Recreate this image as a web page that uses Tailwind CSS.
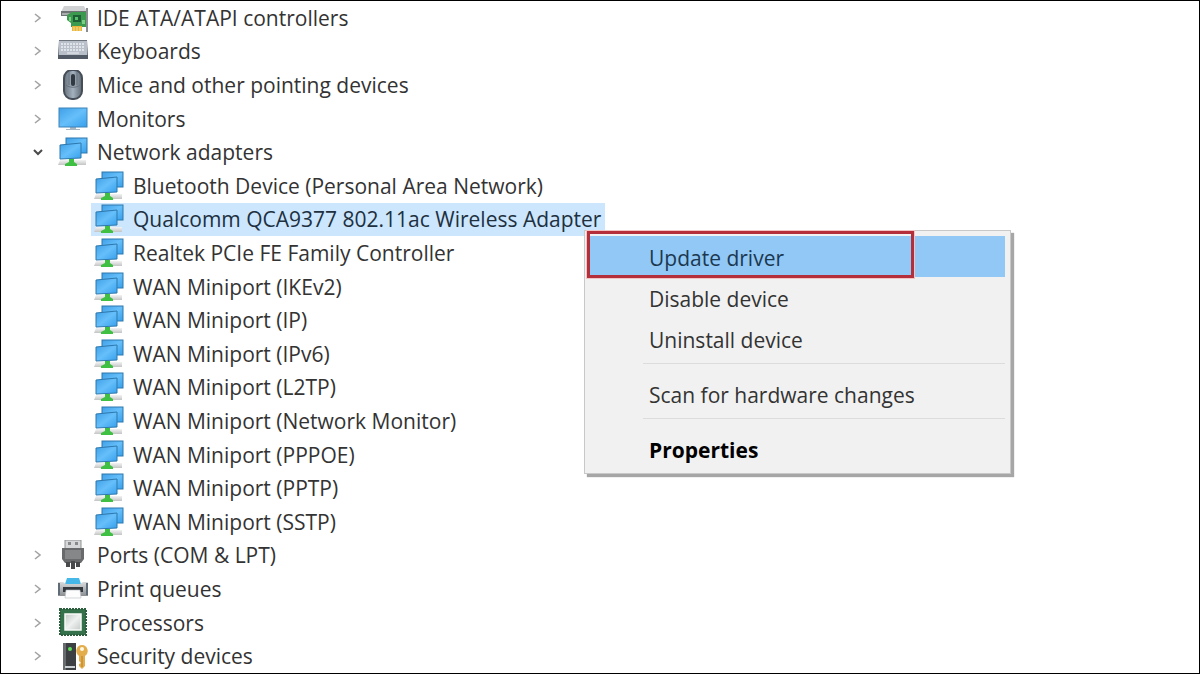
<!DOCTYPE html>
<html lang="en">
<head>
    <meta charset="UTF-8">
    <meta name="viewport" content="width=device-width, initial-scale=1.0">
    <title>Device Manager</title>
    <script src="https://cdn.jsdelivr.net/npm/@tailwindcss/browser@4"></script>
</head>
<body class="bg-white">
    <!-- Icon sprites (zero size, not hidden, so the gradients still resolve) -->
    <svg class="absolute size-0" aria-hidden="true">
        <defs>
            <linearGradient id="screen" x1="0" y1="0" x2="1" y2="1">
                <stop offset="0" stop-color="#3f9fe6"/><stop offset=".5" stop-color="#66bffa"/><stop offset="1" stop-color="#369fec"/>
            </linearGradient>
            <linearGradient id="metal" x1="0" y1="0" x2="0" y2="1">
                <stop offset="0" stop-color="#d9dbdd"/><stop offset="1" stop-color="#8b8f92"/>
            </linearGradient>
            <linearGradient id="mouseBody" x1="0" y1="0" x2="1" y2="0">
                <stop offset="0" stop-color="#66717d"/><stop offset=".5" stop-color="#a3b0bd"/><stop offset="1" stop-color="#5e6974"/>
            </linearGradient>
            <linearGradient id="chip" x1="0" y1="0" x2="1" y2="1">
                <stop offset="0" stop-color="#c2c8c6"/><stop offset=".5" stop-color="#eef1f0"/><stop offset="1" stop-color="#c5cac8"/>
            </linearGradient>
            <linearGradient id="base" x1="0" y1="0" x2="0" y2="1">
                <stop offset="0" stop-color="#f3f3f3"/><stop offset="1" stop-color="#c3c5c4"/>
            </linearGradient>
        </defs>
        <symbol id="right" viewBox="0 0 10 12"><path d="M2 2l5 4-5 4" fill="none" stroke="#a3a3a3" stroke-width="1.6"/></symbol>
        <symbol id="down" viewBox="0 0 12 10"><path d="M1 3l4 4 4-4" fill="none" stroke="#4a4a4a" stroke-width="2"/></symbol>
        <symbol id="ide" viewBox="0 0 30 30">
            <path d="M6 3h20l3 6H3z" fill="#cfd1d2"/>
            <path d="M3 8h26v5H3z" fill="#6f7374"/>
            <path d="M4 10h9v2H4z" fill="#a9adae"/>
            <path d="M9 12l5-3h14v15H13v-4l-4-3z" fill="#3c9a4f"/>
            <path d="M15 12h8v7h-8z" fill="#1f5f35"/>
            <path d="M17 14h3v3h-3z" fill="#58c06c"/>
            <path d="M11 14h2v4h-2zM24 17h3v4h-3z" fill="#7ccf86"/>
            <path d="M14 23h10v5H14z" fill="#e8b53c"/>
            <path d="M16 24v4M19 24v4M22 24v4" stroke="#f8df93"/>
            <path d="M28 5h2v24h-2z" fill="#8a8e90"/>
        </symbol>
        <symbol id="keyboard" viewBox="0 0 30 30">
            <path d="M1 4h28l1 15v4H0v-4z" fill="#6d747c"/>
            <path d="M1 5h28v14H1z" fill="#b9c0c9"/>
            <path d="M3 8h24M3 11h24M3 14h24" stroke="#dfe4ea" stroke-width="2" stroke-dasharray="2 1"/>
            <path d="M9 17h12" stroke="#edf0f4"/>
            <path d="M0 19h30v4H0z" fill="#515a65"/>
        </symbol>
        <symbol id="mouse" viewBox="0 0 30 30">
            <rect x="6" y="0" width="18" height="29" rx="8" fill="url(#mouseBody)" stroke="#454e58" stroke-width="2"/>
            <path d="M8 15c3 3 11 3 14 0M11 2v13M19 2v13" fill="none" stroke="#67727e"/>
            <rect x="13" y="4" width="4" height="12" rx="2" fill="#303842"/>
        </symbol>
        <symbol id="monitor" viewBox="0 0 30 30">
            <path d="M12 23h6v2h4v1H8v-1h4z" fill="#a9b7c2"/>
            <rect x="1" y="4" width="28" height="19" fill="url(#screen)" stroke="#3c83b8" stroke-width="1"/>
        </symbol>
        <symbol id="network" viewBox="0 0 30 30">
            <path d="M2 23h26v5H0z" fill="url(#base)"/>
            <path d="M11 22h5v3l3 2v2H7v-2l4-2z" fill="#3fc043"/>
            <rect x="8" y="1" width="21" height="15" fill="url(#screen)" stroke="#2d78ad"/>
            <path d="M2 8l21-2v15l-21 1z" fill="url(#screen)" stroke="#2d78ad"/>
        </symbol>
        <symbol id="port" viewBox="0 0 30 30">
            <path d="M7 0h16v9H7z" fill="#d6d7d8" stroke="#8f9192"/>
            <path d="M10 2h3v3h-3zM17 2h3v3h-3z" fill="#87898a"/>
            <path d="M4 8h22v11l-3 4H7l-3-4z" fill="#686a6b"/>
            <path d="M7 10h16v9H7z" fill="#858788"/>
            <path d="M8 22h4v5H8zM13 21h4v8h-4zM18 22h4v5h-4z" fill="#484a4b"/>
        </symbol>
        <symbol id="printer" viewBox="0 0 30 30">
            <path d="M9 4h12l2 6H7z" fill="#45b7e8"/>
            <path d="M0 8h5l3 2h14l3-2h5v14H0z" fill="url(#metal)"/>
            <path d="M0 9h2v12H0zM28 9h2v12h-2z" fill="#5f6b76"/>
            <path d="M5 13h20v5H5z" fill="#343a40"/>
            <path d="M8 16h14l1 8H7z" fill="#fdfdfd" stroke="#b7bcc0" stroke-width=".6"/>
        </symbol>
        <symbol id="processor" viewBox="0 0 30 30">
            <rect x="2" y="1" width="26" height="26" fill="#35714a"/>
            <rect x="2" y="1" width="26" height="26" fill="none" stroke="#2d5f3e" stroke-width="2" stroke-dasharray="2 1"/>
            <rect x="7" y="6" width="16" height="16" fill="url(#chip)" stroke="#f7faf8" stroke-width="1.5"/>
        </symbol>
        <symbol id="security" viewBox="0 0 30 30">
            <path d="M5 2h13v27H5z" fill="#3c4043"/>
            <path d="M5 2h3v27H5z" fill="#686c6e"/>
            <path d="M7 25h10v2H7z" fill="#cbd0d2"/>
            <circle cx="12" cy="8" r="2" fill="#5fe05a"/>
            <path d="M24 4a6 6 0 0 1 3 11v10l-3 3-3-3v-2l2-1-2-2v-5a6 6 0 0 1 3-11z" fill="#e3ad4c"/>
            <path d="M24 15v11" stroke="#b67e26"/>
            <circle cx="24" cy="8" r="2" fill="#fff8e4"/>
        </symbol>
    </svg>

    <div class="h-screen pb-px">
        <main class="relative h-full overflow-hidden border border-black bg-white font-['Open_Sans',sans-serif] text-[21px] leading-8 text-[#333333]">
            <!-- Device tree -->
            <ul class="grid h-full auto-rows-fr whitespace-nowrap pl-8">
                <li class="flex items-center"><button class="mr-[15px] w-[10px]" aria-label="Expand"><svg class="h-3 w-[10px]"><use href="#right"/></svg></button><svg class="mr-[9px] size-[30px]"><use href="#ide"/></svg>IDE ATA/ATAPI controllers</li>
                <li class="flex items-center"><button class="mr-[15px] w-[10px]" aria-label="Expand"><svg class="h-3 w-[10px]"><use href="#right"/></svg></button><svg class="mr-[9px] size-[30px]"><use href="#keyboard"/></svg>Keyboards</li>
                <li class="flex items-center"><button class="mr-[15px] w-[10px]" aria-label="Expand"><svg class="h-3 w-[10px]"><use href="#right"/></svg></button><svg class="mr-[9px] size-[30px]"><use href="#mouse"/></svg>Mice and other pointing devices</li>
                <li class="flex items-center"><button class="mr-[15px] w-[10px]" aria-label="Expand"><svg class="h-3 w-[10px]"><use href="#right"/></svg></button><svg class="mr-[9px] size-[30px]"><use href="#monitor"/></svg>Monitors</li>
                <li class="flex items-center"><button class="mr-[15px] w-[10px]" aria-label="Collapse"><svg class="h-[10px] w-3"><use href="#down"/></svg></button><svg class="mr-[9px] size-[30px]"><use href="#network"/></svg>Network adapters</li>
                <li class="ml-[58px] flex items-center pl-[3px]"><svg class="mr-[9px] size-[30px]"><use href="#network"/></svg>Bluetooth Device (Personal Area Network)</li>
                <li class="ml-[58px] flex w-fit items-center bg-[#cce6fe] pl-[3px] pr-1 text-[#20303f]"><svg class="mr-[9px] size-[30px]"><use href="#network"/></svg>Qualcomm QCA9377 802.11ac Wireless Adapter</li>
                <li class="ml-[58px] flex items-center pl-[3px]"><svg class="mr-[9px] size-[30px]"><use href="#network"/></svg>Realtek PCIe FE Family Controller</li>
                <li class="ml-[58px] flex items-center pl-[3px]"><svg class="mr-[9px] size-[30px]"><use href="#network"/></svg>WAN Miniport (IKEv2)</li>
                <li class="ml-[58px] flex items-center pl-[3px]"><svg class="mr-[9px] size-[30px]"><use href="#network"/></svg>WAN Miniport (IP)</li>
                <li class="ml-[58px] flex items-center pl-[3px]"><svg class="mr-[9px] size-[30px]"><use href="#network"/></svg>WAN Miniport (IPv6)</li>
                <li class="ml-[58px] flex items-center pl-[3px]"><svg class="mr-[9px] size-[30px]"><use href="#network"/></svg>WAN Miniport (L2TP)</li>
                <li class="ml-[58px] flex items-center pl-[3px]"><svg class="mr-[9px] size-[30px]"><use href="#network"/></svg>WAN Miniport (Network Monitor)</li>
                <li class="ml-[58px] flex items-center pl-[3px]"><svg class="mr-[9px] size-[30px]"><use href="#network"/></svg>WAN Miniport (PPPOE)</li>
                <li class="ml-[58px] flex items-center pl-[3px]"><svg class="mr-[9px] size-[30px]"><use href="#network"/></svg>WAN Miniport (PPTP)</li>
                <li class="ml-[58px] flex items-center pl-[3px]"><svg class="mr-[9px] size-[30px]"><use href="#network"/></svg>WAN Miniport (SSTP)</li>
                <li class="flex items-center"><button class="mr-[15px] w-[10px]" aria-label="Expand"><svg class="h-3 w-[10px]"><use href="#right"/></svg></button><svg class="mr-[9px] size-[30px]"><use href="#port"/></svg>Ports (COM &amp; LPT)</li>
                <li class="flex items-center"><button class="mr-[15px] w-[10px]" aria-label="Expand"><svg class="h-3 w-[10px]"><use href="#right"/></svg></button><svg class="mr-[9px] size-[30px]"><use href="#printer"/></svg>Print queues</li>
                <li class="flex items-center"><button class="mr-[15px] w-[10px]" aria-label="Expand"><svg class="h-3 w-[10px]"><use href="#right"/></svg></button><svg class="mr-[9px] size-[30px]"><use href="#processor"/></svg>Processors</li>
                <li class="flex items-center"><button class="mr-[15px] w-[10px]" aria-label="Expand"><svg class="h-3 w-[10px]"><use href="#right"/></svg></button><svg class="mr-[9px] size-[30px]"><use href="#security"/></svg>Security devices</li>
            </ul>

            <!-- Context menu -->
            <div role="menu" class="absolute left-[583px] top-[229px] flex w-[427px] flex-col border border-[#c8c8c8] bg-[#f1f1f1] pb-1 pl-1 pr-[5px] pt-[5px] shadow-[3px_3px_1px_#a6a6a6]">
                <button role="menuitem" class="h-[41px] bg-[#91c8f6] pl-[60px] pt-0.5 text-left text-[#1c3850]">Update driver</button>
                <button role="menuitem" class="h-[41px] pl-[60px] pt-0.5 text-left">Disable device</button>
                <button role="menuitem" class="h-[41px] pl-[60px] pt-0.5 text-left">Uninstall device</button>
                <hr class="mb-[9px] ml-[54px] mt-1 border-[#dcdcdc]">
                <button role="menuitem" class="h-[41px] pl-[60px] pt-0.5 text-left">Scan for hardware changes</button>
                <hr class="mb-[9px] ml-[54px] mt-1 border-[#dcdcdc]">
                <button role="menuitem" class="h-[41px] pl-[60px] pt-0.5 text-left font-bold text-black">Properties</button>
                <!-- Highlight frame -->
                <div class="pointer-events-none absolute left-0.5 top-0 h-[47px] w-[327px] border-3 border-[#b52f3b] ring-1 ring-[#f3c4c4]"></div>
            </div>
        </main>
    </div>
</body>
</html>
